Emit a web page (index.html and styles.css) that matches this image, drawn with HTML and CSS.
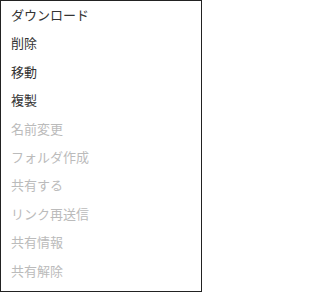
FILE: index.html
```html
<!DOCTYPE html>
<html lang="ja">
<head>
<meta charset="utf-8">
<link rel="stylesheet" href="styles.css">
</head>
<body>
<ul class="menu">
  <li class="item">ダウンロード</li>
  <li class="item">削除</li>
  <li class="item">移動</li>
  <li class="item">複製</li>
  <li class="item disabled">名前変更</li>
  <li class="item disabled">フォルダ作成</li>
  <li class="item disabled">共有する</li>
  <li class="item disabled">リンク再送信</li>
  <li class="item disabled">共有情報</li>
  <li class="item disabled">共有解除</li>
</ul>
</body>
</html>
```
FILE: styles.css
```css
html, body {
  margin: 0;
  padding: 0;
  background: #fff;
}
.menu {
  list-style: none;
  margin: 0;
  padding: 0;
  width: 202px;
  height: 292px;
  box-sizing: border-box;
  border: 1px solid #222;
  overflow: hidden;
  font-family: "Noto Sans CJK JP", "Noto Sans", sans-serif;
  font-size: 13px;
}
.item {
  padding: 6px 10px;
  line-height: 16.4px;
  color: #333;
}
.item.disabled {
  color: #bbb;
}
```
